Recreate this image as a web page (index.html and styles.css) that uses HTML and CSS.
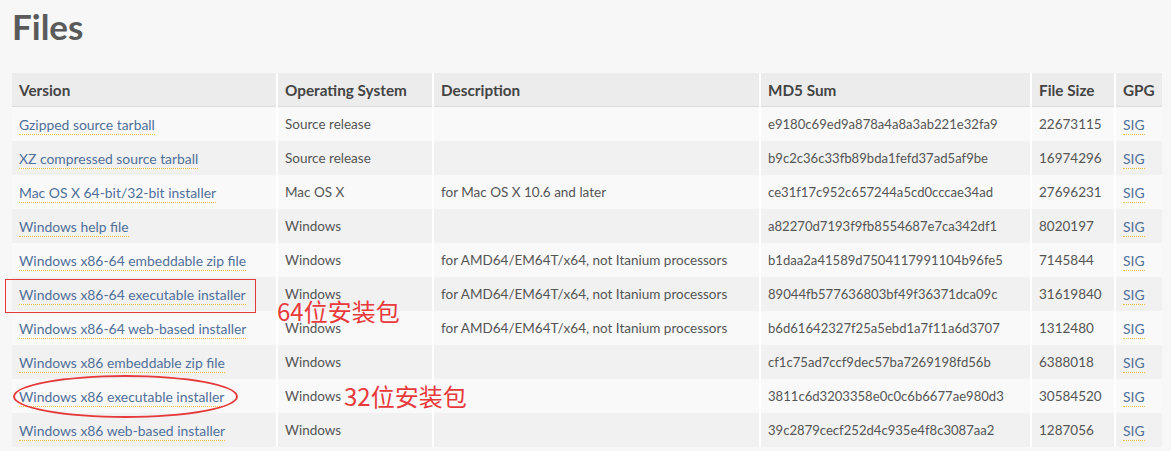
FILE: index.html
```html
<!DOCTYPE html>
<html lang="zh">
<head>
<meta charset="utf-8">
<title>Files</title>
<link rel="stylesheet" href="styles.css">
</head>
<body>
<div class="page">
  <h1 class="title">Files</h1>
  <div class="table-wrap">
    <table class="files">
      <colgroup>
        <col class="c-ver"><col class="c-os"><col class="c-desc"><col class="c-md5"><col class="c-size"><col class="c-gpg">
      </colgroup>
      <thead>
        <tr><th>Version</th><th>Operating System</th><th>Description</th><th>MD5 Sum</th><th>File Size</th><th>GPG</th></tr>
      </thead>
      <tbody>
        <tr><td><a href="#">Gzipped source tarball</a></td><td>Source release</td><td></td><td class="md5">e9180c69ed9a878a4a8a3ab221e32fa9</td><td>22673115</td><td><a href="#">SIG</a></td></tr>
        <tr><td><a href="#">XZ compressed source tarball</a></td><td>Source release</td><td></td><td class="md5">b9c2c36c33fb89bda1fefd37ad5af9be</td><td>16974296</td><td><a href="#">SIG</a></td></tr>
        <tr><td><a href="#">Mac OS X 64-bit/32-bit installer</a></td><td>Mac OS X</td><td>for Mac OS X 10.6 and later</td><td class="md5">ce31f17c952c657244a5cd0cccae34ad</td><td>27696231</td><td><a href="#">SIG</a></td></tr>
        <tr><td><a href="#">Windows help file</a></td><td>Windows</td><td></td><td class="md5">a82270d7193f9fb8554687e7ca342df1</td><td>8020197</td><td><a href="#">SIG</a></td></tr>
        <tr><td><a href="#">Windows x86-64 embeddable zip file</a></td><td>Windows</td><td>for AMD64/EM64T/x64, not Itanium processors</td><td class="md5">b1daa2a41589d7504117991104b96fe5</td><td>7145844</td><td><a href="#">SIG</a></td></tr>
        <tr><td><a href="#">Windows x86-64 executable installer</a></td><td>Windows</td><td>for AMD64/EM64T/x64, not Itanium processors</td><td class="md5">89044fb577636803bf49f36371dca09c</td><td>31619840</td><td><a href="#">SIG</a></td></tr>
        <tr><td><a href="#">Windows x86-64 web-based installer</a></td><td>Windows</td><td>for AMD64/EM64T/x64, not Itanium processors</td><td class="md5">b6d61642327f25a5ebd1a7f11a6d3707</td><td>1312480</td><td><a href="#">SIG</a></td></tr>
        <tr><td><a href="#">Windows x86 embeddable zip file</a></td><td>Windows</td><td></td><td class="md5">cf1c75ad7ccf9dec57ba7269198fd56b</td><td>6388018</td><td><a href="#">SIG</a></td></tr>
        <tr><td><a href="#">Windows x86 executable installer</a></td><td>Windows</td><td></td><td class="md5">3811c6d3203358e0c0c6b6677ae980d3</td><td>30584520</td><td><a href="#">SIG</a></td></tr>
        <tr><td><a href="#">Windows x86 web-based installer</a></td><td>Windows</td><td></td><td class="md5">39c2879cecf252d4c935e4f8c3087aa2</td><td>1287056</td><td><a href="#">SIG</a></td></tr>
      </tbody>
    </table>
    <div class="mark-rect"></div>
    <div class="mark-ellipse"></div>
    <div class="note note-64">64位安装包</div>
    <div class="note note-32">32位安装包</div>
  </div>
</div>
</body>
</html>
```
FILE: styles.css
```css
html, body {
  margin: 0;
  padding: 0;
  background: #f7f7f7;
}
.page {
  padding: 0 9px 0 12px;
  font-family: "Lato", "Liberation Sans", sans-serif;
  color: #555;
}
.title {
  margin: 0;
  padding-top: 6px;
  height: 67px;
  font-size: 35px;
  line-height: 40px;
  font-weight: 700;
  color: #5a5a5a;
}
.table-wrap {
  position: relative;
}
.files {
  width: 1150px;
  table-layout: fixed;
  border-collapse: collapse;
  font-size: 13.5px;
}
.c-ver { width: 265px; }
.c-os { width: 156px; }
.c-desc { width: 327px; }
.c-md5 { width: 271px; }
.c-size { width: 84px; }
.c-gpg { width: 47px; }
.files th, .files td {
  text-align: left;
  padding: 0 7px;
  height: 34px;
  border-right: 2px solid #fff;
  white-space: nowrap;
  overflow: hidden;
}
.files td.md5 {
  font-size: 13.1px;
}
.files th:last-child, .files td:last-child {
  border-right: 0;
}
.files th {
  background: #ececec;
  color: #444;
  font-weight: 700;
  font-size: 15.3px;
  border-bottom: 1px solid #dcdcdc;
  height: 33px;
}
.files tbody tr:nth-child(odd) td { background: #f9f9f9; }
.files tbody tr:nth-child(even) td { background: #f1f1f1; }
.files a {
  color: #50709a;
  font-size: 13.9px;
  text-decoration: none;
  border-bottom: 1px dotted #f0c23a;
  padding-bottom: 1px;
}
.mark-rect {
  position: absolute;
  left: -7px;
  top: 206px;
  width: 249px;
  height: 32px;
  border: 1px solid #e5393b;
}
.mark-ellipse {
  position: absolute;
  left: 1px;
  top: 302px;
  width: 221px;
  height: 39px;
  border: 2px solid #e5393b;
  border-radius: 50%;
}
.note {
  position: absolute;
  font-family: "Noto Sans CJK SC", sans-serif;
  font-size: 24px;
  line-height: 28px;
  color: #e8393c;
}
.note-64 { left: 265px; top: 224px; }
.note-32 { left: 332px; top: 309px; }
```
